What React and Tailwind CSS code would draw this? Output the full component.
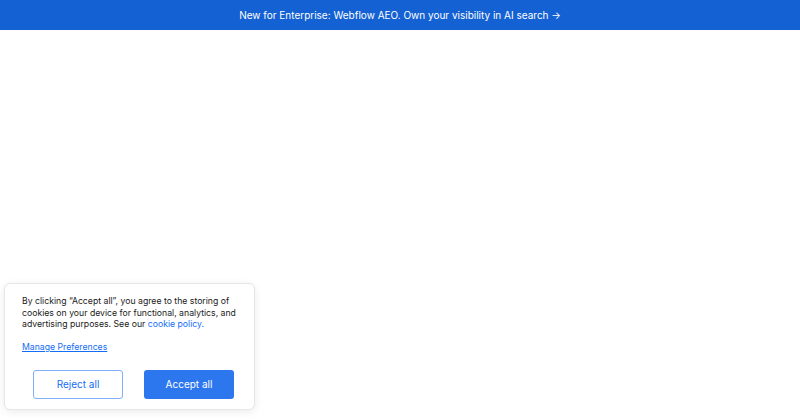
export default function App() {
  return (
    <div className="relative h-[420px] w-[800px] overflow-hidden bg-white font-['Inter',sans-serif]">
      {/* Announcement bar */}
      <a
        href="#"
        className="flex h-[30px] items-center justify-center bg-[#1461d3] text-[10px] text-white"
      >
        New for Enterprise: Webflow AEO. Own your visibility in AI search →
      </a>

      {/* Cookie consent */}
      <div className="absolute left-[4px] top-[283px] w-[251px] rounded-[6px] border border-[#e6e6e6] bg-white px-[17px] pb-[10px] pt-[12px] shadow-[0_2px_8px_rgba(0,0,0,0.08)]">
        <p className="text-[8.7px] leading-[11.5px] text-[#1a1a1a]">
          By clicking “Accept all”, you agree to the storing of cookies on your device for
          functional, analytics, and advertising purposes. See our{' '}
          <a href="#" className="text-[#146ef5]">
            cookie policy.
          </a>
        </p>
        <a href="#" className="mt-[11.5px] block w-fit text-[8.7px] leading-[11.5px] text-[#146ef5] underline">
          Manage Preferences
        </a>
        <div className="mt-[16.5px] flex gap-[21px] pl-[11px]">
          <button className="h-[29px] w-[90px] rounded-[3px] border border-[#7fb0f7] bg-white text-[10px] text-[#146ef5]">
            Reject all
          </button>
          <button className="h-[29px] w-[90px] rounded-[3px] bg-[#2c77ee] text-[10px] text-white">
            Accept all
          </button>
        </div>
      </div>
    </div>
  )
}
